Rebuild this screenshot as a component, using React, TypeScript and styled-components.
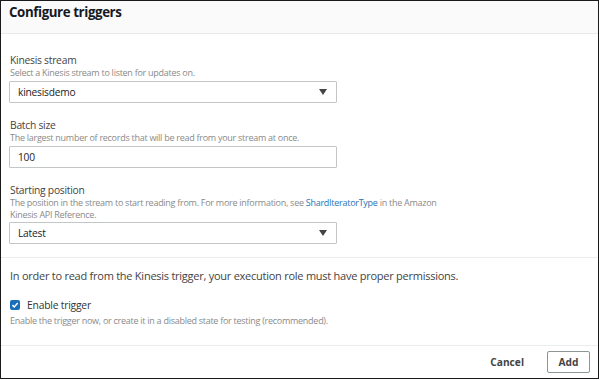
import React from "react";
import styled, { createGlobalStyle } from "styled-components";

const GlobalStyle = createGlobalStyle`
  html, body { margin: 0; padding: 0; background: #fff; }
  body { font-family: "Open Sans", "Noto Sans", Arial, sans-serif; }
  * { box-sizing: border-box; }
`;

const Frame = styled.div`
  width: 599px;
  height: 379px;
  border: 1px solid #1a1a1a;
  display: flex;
  flex-direction: column;
  overflow: hidden;
  background: #fff;
`;

const Header = styled.div`
  height: 33px;
  flex: none;
  background: #fafafa;
  border-bottom: 1px solid #e8eaea;
  display: flex;
  align-items: flex-start;
  padding: 3px 0 0 8px;
`;

const Title = styled.h2`
  margin: 0;
  font-size: 13.3px;
  line-height: 17px;
  font-weight: 700;
  color: #16191f;
  letter-spacing: -0.4px;
`;

const Section = styled.div<{ $pt: number; $pb: number }>`
  padding: ${(p) => p.$pt}px 8px ${(p) => p.$pb}px 8px;
  display: flex;
  flex-direction: column;
`;

const Divider = styled.div`
  height: 1px;
  background: #eaeded;
  flex: none;
`;

const Field = styled.div<{ $mt?: number }>`
  display: flex;
  flex-direction: column;
  margin-top: ${(p) => p.$mt ?? 0}px;
`;

const Label = styled.div`
  font-size: 10.3px;
  line-height: 14px;
  color: #444;
  letter-spacing: -0.25px;
  padding-left: 1px;
`;

const Desc = styled.div<{ $mt?: number }>`
  font-size: 9px;
  line-height: 12px;
  color: #8a8a8a;
  letter-spacing: -0.27px;
  padding-left: 1px;
  margin-top: ${(p) => p.$mt ?? 0}px;
`;

const Link = styled.span`
  color: #2a74b5;
`;

const Box = styled.div<{ $mt?: number }>`
  width: 328px;
  height: 22px;
  margin-top: ${(p) => p.$mt ?? 2}px;
  border: 1px solid #c2c6c6;
  border-radius: 1px;
  display: flex;
  align-items: center;
  justify-content: space-between;
  padding: 0 8px 0 8px;
  font-size: 10.2px;
  letter-spacing: -0.2px;
  color: #222;
  background: #fff;
`;

const Caret = styled.span`
  width: 0;
  height: 0;
  border-left: 4.5px solid transparent;
  border-right: 4.5px solid transparent;
  border-top: 6px solid #444;
  margin-right: 1px;
`;

const Note = styled.div`
  font-size: 11px;
  line-height: 14px;
  color: #444;
  letter-spacing: -0.25px;
  padding-left: 1px;
`;

const CheckRow = styled.label`
  display: flex;
  align-items: center;
  gap: 7px;
  margin-top: 15px;
  font-size: 10.3px;
  line-height: 14px;
  letter-spacing: -0.2px;
  color: #333;
`;

const CheckBox = styled.span`
  width: 10px;
  height: 10px;
  border-radius: 2px;
  background: #1a6fb8;
  display: flex;
  align-items: center;
  justify-content: center;
  margin-left: 1px;
`;

const Footer = styled.div`
  flex: 1;
  display: flex;
  justify-content: flex-end;
  align-items: center;
  padding-right: 8px;
  gap: 19px;
`;

const Button = styled.button<{ $outlined?: boolean }>`
  font-family: inherit;
  font-size: 10.2px;
  font-weight: 700;
  color: #444;
  background: #fff;
  height: 22px;
  width: ${(p) => (p.$outlined ? "43px" : "auto")};
  padding: ${(p) => (p.$outlined ? "0" : "0 4px")};
  border: ${(p) => (p.$outlined ? "1px solid #8d9696" : "none")};
  border-radius: 2px;
  cursor: pointer;
`;

export default function App() {
  return (
    <>
      <GlobalStyle />
      <Frame>
        <Header>
          <Title>Configure triggers</Title>
        </Header>
        <Section $pt={19} $pb={13}>
          <Field>
            <Label>Kinesis stream</Label>
            <Desc>Select a Kinesis stream to listen for updates on.</Desc>
            <Box>
              <span>kinesisdemo</span>
              <Caret />
            </Box>
          </Field>
          <Field $mt={15}>
            <Label>Batch size</Label>
            <Desc>The largest number of records that will be read from your stream at once.</Desc>
            <Box>
              <span>100</span>
            </Box>
          </Field>
          <Field $mt={15}>
            <Label>Starting position</Label>
            <Desc>
              The position in the stream to start reading from. For more information, see{" "}
              <Link>ShardIteratorType</Link> in the Amazon
              <br />
              Kinesis API Reference.
            </Desc>
            <Box $mt={1}>
              <span>Latest</span>
              <Caret />
            </Box>
          </Field>
        </Section>
        <Divider />
        <Section $pt={11} $pb={18}>
          <Note>In order to read from the Kinesis trigger, your execution role must have proper permissions.</Note>
          <CheckRow>
            <CheckBox>
              <svg width="8" height="8" viewBox="0 0 10 10">
                <path d="M1.8 5.2 L4.1 7.5 L8.4 2.5" fill="none" stroke="#fff" strokeWidth="1.9" />
              </svg>
            </CheckBox>
            Enable trigger
          </CheckRow>
          <Desc $mt={3}>Enable the trigger now, or create it in a disabled state for testing (recommended).</Desc>
        </Section>
        <Divider />
        <Footer>
          <Button>Cancel</Button>
          <Button $outlined>Add</Button>
        </Footer>
      </Frame>
    </>
  );
}
